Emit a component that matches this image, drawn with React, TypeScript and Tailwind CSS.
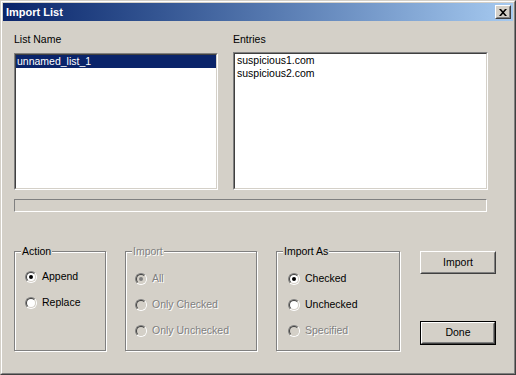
import React from 'react';

const face = 'bg-[#d4d0c8]';

function Radio({ checked, disabled }: { checked?: boolean; disabled?: boolean }) {
  return (
    <div className="w-[12px] h-[12px] rounded-full border border-t-[#808080] border-l-[#808080] border-r-white border-b-white shrink-0">
      <div
        className={`w-full h-full rounded-full border border-t-[#404040] border-l-[#404040] border-r-[#d4d0c8] border-b-[#d4d0c8] flex items-center justify-center ${
          disabled ? 'bg-[#d4d0c8]' : 'bg-white'
        }`}
      >
        {checked && (
          <div className={`w-[4px] h-[4px] rounded-full ${disabled ? 'bg-[#808080]' : 'bg-black'}`} />
        )}
      </div>
    </div>
  );
}

function Option({ label, checked, disabled }: { label: string; checked?: boolean; disabled?: boolean }) {
  return (
    <div className="h-[26px] flex items-center gap-[5px]">
      <Radio checked={checked} disabled={disabled} />
      <span className={disabled ? 'text-[#808080] [text-shadow:1px_1px_0_#fff]' : 'text-black'}>{label}</span>
    </div>
  );
}

function Group({
  title,
  disabled,
  className,
  children,
}: {
  title: string;
  disabled?: boolean;
  className: string;
  children: React.ReactNode;
}) {
  return (
    <div
      className={`relative h-[100px] border border-[#808080] shadow-[1px_1px_0_#fff,inset_1px_1px_0_#fff] ${className}`}
    >
      <span
        className={`absolute -top-[7px] left-[6px] px-[1px] leading-[13px] ${face} ${
          disabled ? 'text-[#808080] [text-shadow:1px_1px_0_#fff]' : 'text-black'
        }`}
      >
        {title}
      </span>
      {children}
    </div>
  );
}

function Button({ label, isDefault }: { label: string; isDefault?: boolean }) {
  const inner = (
    <div className="h-full border border-t-white border-l-white border-r-[#404040] border-b-[#404040]">
      <div className="h-full border border-t-[#d4d0c8] border-l-[#d4d0c8] border-r-[#808080] border-b-[#808080] flex items-center justify-center">
        {label}
      </div>
    </div>
  );
  if (isDefault) {
    return <div className="w-[76px] h-[24px] border border-black">{inner}</div>;
  }
  return <div className="w-[76px] h-[23px]">{inner}</div>;
}

export default function App() {
  return (
    <div
      className={`w-[516px] h-[375px] ${face} font-['Liberation_Sans',Arial,sans-serif] text-[10.5px] text-black border border-t-[#d4d0c8] border-l-[#d4d0c8] border-r-[#404040] border-b-[#404040]`}
    >
      <div className="h-full border border-t-white border-l-white border-r-[#808080] border-b-[#808080] p-[1px] flex flex-col">
        {/* title bar */}
        <div className="h-[18px] shrink-0 bg-linear-to-r from-[#0a246a] to-[#a6caf0] flex items-center justify-between pl-[3px] pr-[2px]">
          <span className="text-white font-bold text-[11px] leading-none">Import List</span>
          <div className="w-[16px] h-[14px] border border-t-white border-l-white border-r-[#404040] border-b-[#404040] bg-[#d4d0c8]">
            <div className="h-full border border-t-[#d4d0c8] border-l-[#d4d0c8] border-r-[#808080] border-b-[#808080] flex items-center justify-center">
              <svg width="8" height="7" viewBox="0 0 8 7">
                <path d="M0 0h2l2 2.3L6 0h2L5 3.5 8 7H6L4 4.7 2 7H0l3-3.5z" fill="#000" />
              </svg>
            </div>
          </div>
        </div>

        {/* client area */}
        <div className="flex-1 pl-[11px] pt-[12px]">
          <div className="flex">
            <div className="w-[204px] flex flex-col">
              <div className="leading-[13px] h-[13px]">List Name</div>
              <div className="mt-[7px] h-[137px] border border-t-[#808080] border-l-[#808080] border-r-white border-b-white">
                <div className="h-full bg-white border border-t-[#404040] border-l-[#404040] border-r-[#d4d0c8] border-b-[#d4d0c8]">
                  <div className="h-[13px] leading-[13px] bg-[#0a246a] text-white pl-[1px]">unnamed_list_1</div>
                </div>
              </div>
            </div>
            <div className="w-[255px] ml-[15px] flex flex-col">
              <div className="leading-[13px] h-[13px]">Entries</div>
              <div className="mt-[6px] h-[138px] border border-t-[#808080] border-l-[#808080] border-r-white border-b-white">
                <div className="h-full bg-white border border-t-[#404040] border-l-[#404040] border-r-[#d4d0c8] border-b-[#d4d0c8] pl-[2px] leading-[13px]">
                  <div>suspicious1.com</div>
                  <div>suspicious2.com</div>
                </div>
              </div>
            </div>
          </div>

          {/* progress */}
          <div className="mt-[9px] w-[473px] h-[13px] border border-t-[#808080] border-l-[#808080] border-r-white border-b-white" />

          {/* bottom row */}
          <div className="mt-[39px] flex items-start">
            <Group title="Action" className="w-[92px] pl-[10px] pt-[12px]">
              <Option label="Append" checked />
              <Option label="Replace" />
            </Group>
            <Group title="Import" disabled className="w-[132px] ml-[19px] pl-[9px] pt-[14px]">
              <Option label="All" checked disabled />
              <Option label="Only Checked" disabled />
              <Option label="Only Unchecked" disabled />
            </Group>
            <Group title="Import As" className="w-[124px] ml-[19px] pl-[11px] pt-[14px]">
              <Option label="Checked" checked />
              <Option label="Unchecked" />
              <Option label="Specified" disabled />
            </Group>
            <div className="ml-[20px] flex flex-col">
              <Button label="Import" />
              <div className="mt-[47px]">
                <Button label="Done" isDefault />
              </div>
            </div>
          </div>
        </div>
      </div>
    </div>
  );
}
